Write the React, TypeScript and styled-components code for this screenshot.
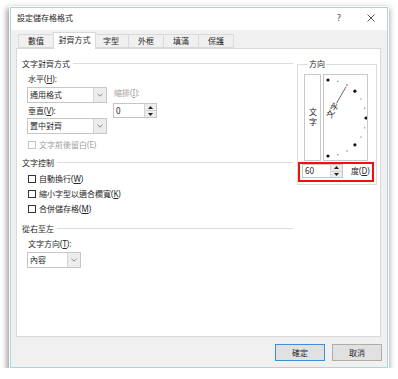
import styled, { createGlobalStyle } from "styled-components";

const GlobalStyle = createGlobalStyle`
  html, body { margin: 0; padding: 0; background: #fff; }
  body {
    font-family: "Noto Sans", "Noto Sans CJK TC", sans-serif;
    font-size: 8px;
    line-height: 10px;
    color: #262626;
    text-autospace: no-autospace;
  }
  u { text-underline-offset: 1px; }
`;

const tabs = [
  { label: "數值", w: 36 },
  { label: "對齊方式", w: 39, active: true },
  { label: "字型", w: 36 },
  { label: "外框", w: 36 },
  { label: "填滿", w: 36 },
  { label: "保護", w: 36 },
];

const textControls = [
  { label: "自動換行", key: "W" },
  { label: "縮小字型以適合欄寬", key: "K" },
  { label: "合併儲存格", key: "M" },
];

const Chevron = () => (
  <svg width="6" height="4" viewBox="0 0 6 4">
    <path d="M0.5 0.8 L3 3.2 L5.5 0.8" fill="none" stroke="#7a7a7a" strokeWidth="0.9" />
  </svg>
);

const Select = ({ value, width, top }: { value: string; width: number; top: number }) => (
  <S.Select $w={width} $top={top}>
    <span>{value}</span>
    <S.DropButton>
      <Chevron />
    </S.DropButton>
  </S.Select>
);

const Spinner = () => (
  <S.Spinner>
    <S.SpinHalf>
      <svg width="5" height="3" viewBox="0 0 5 3"><path d="M2.5 0 L5 3 L0 3 Z" fill="#222" /></svg>
    </S.SpinHalf>
    <S.SpinHalf>
      <svg width="5" height="3" viewBox="0 0 5 3"><path d="M0 0 L5 0 L2.5 3 Z" fill="#222" /></svg>
    </S.SpinHalf>
  </S.Spinner>
);

// half dial, centre on the left edge, 15 degree ticks
const Dial = () => {
  const cx = 4;
  const cy = 43;
  const r = 38;
  const dots = [];
  for (let a = -90; a <= 90; a += 15) {
    const rad = (a * Math.PI) / 180;
    const big = a % 45 === 0;
    const picked = a === 60;
    dots.push(
      <circle
        key={a}
        cx={cx + r * Math.cos(rad)}
        cy={cy - r * Math.sin(rad)}
        r={big ? 1.6 : picked ? 0.8 : 0.6}
        fill={big ? "#111" : picked ? "#e8333a" : "#555"}
      />
    );
  }
  const dx = Math.cos(Math.PI / 3);
  const dy = -Math.sin(Math.PI / 3);
  return (
    <svg width="43" height="85" viewBox="0 0 43 85">
      {dots}
      <line x1={cx + dx * 17} y1={cy + dy * 17} x2={cx + dx * 36} y2={cy + dy * 36} stroke="#444" strokeWidth="0.8" />
      <text
        x={cx + 1}
        y={cy + 3}
        fontSize="8"
        fill="#262626"
        fontFamily='"Noto Sans CJK TC", sans-serif'
        transform={`rotate(-60 ${cx} ${cy})`}
      >
        文字
      </text>
    </svg>
  );
};

const App = () => (
  <>
    <GlobalStyle />
    <S.Window>
      <S.TitleBar>
        <S.Title>設定儲存格格式</S.Title>
        <S.TitleButton>?</S.TitleButton>
        <S.TitleButton>
          <svg width="8" height="8" viewBox="0 0 8 8">
            <path d="M0.5 0.5 L7.5 7.5 M7.5 0.5 L0.5 7.5" stroke="#444" strokeWidth="0.9" />
          </svg>
        </S.TitleButton>
      </S.TitleBar>

      <S.TabStrip>
        {tabs.map((t) => (
          <S.Tab key={t.label} $w={t.w} $active={t.active}>
            {t.label}
          </S.Tab>
        ))}
      </S.TabStrip>

      <S.Panel>
        <S.LeftCol>
          <S.GroupHeader $top={0}>文字對齊方式</S.GroupHeader>
          <S.Indent>
            <S.FieldLabel $top={5}>
              水平(<u>H</u>):
            </S.FieldLabel>
            <S.AlignRow>
              <S.SubCol>
                <Select value="通用格式" width={80} top={0} />
                <S.FieldLabel $top={3}>
                  垂直(<u>V</u>):
                </S.FieldLabel>
                <Select value="置中對齊" width={80} top={2} />
              </S.SubCol>
              <S.IndentCol>
                <S.FieldLabel $top={0} $disabled>
                  縮排(<u>I</u>):
                </S.FieldLabel>
                <S.SpinBox $w={44} $h={15} $top={5}>
                  <S.SpinValue>0</S.SpinValue>
                  <Spinner />
                </S.SpinBox>
              </S.IndentCol>
            </S.AlignRow>
            <S.CheckRow $top={6} $disabled>
              <S.CheckBox $disabled />
              文字前後留白(E)
            </S.CheckRow>
          </S.Indent>

          <S.GroupHeader $top={8}>文字控制</S.GroupHeader>
          <S.CheckList>
            {textControls.map((c) => (
              <S.CheckRow key={c.key} $top={0}>
                <S.CheckBox />
                <span>
                  {c.label}(<u>{c.key}</u>)
                </span>
              </S.CheckRow>
            ))}
          </S.CheckList>

          <S.GroupHeader $top={10}>從右至左</S.GroupHeader>
          <S.Indent>
            <S.FieldLabel $top={5}>
              文字方向(<u>T</u>):
            </S.FieldLabel>
            <Select value="內容" width={54} top={3} />
          </S.Indent>
        </S.LeftCol>

        <S.Orientation>
          <S.Legend>方向</S.Legend>
          <S.DialRow>
            <S.VerticalText>文字</S.VerticalText>
            <S.DialBox>
              <Dial />
            </S.DialBox>
          </S.DialRow>
          <S.DegreeRow>
            <S.SpinBox $w={41} $h={14} $top={0}>
              <S.SpinValue>60</S.SpinValue>
              <Spinner />
            </S.SpinBox>
            <span>
              度(<u>D</u>)
            </span>
          </S.DegreeRow>
        </S.Orientation>
      </S.Panel>

      <S.Footer>
        <S.Button $primary>確定</S.Button>
        <S.Button>取消</S.Button>
      </S.Footer>
    </S.Window>
  </>
);

namespace S {
  export const Window = styled.div`
    box-sizing: border-box;
    width: 378px;
    height: 361px;
    margin: 7px 0 0 10px;
    border: 1px solid #a9d4de;
    background: #f0f0f0;
    box-shadow: 0 0 0 1px #fff, -1px 3px 6px 2px rgba(0, 0, 0, 0.42);
    display: flex;
    flex-direction: column;
  `;

  export const TitleBar = styled.div`
    height: 22px;
    background: #fff;
    display: flex;
    align-items: center;
    padding: 0 0 2px 6px;
    box-sizing: border-box;
  `;

  export const Title = styled.div`
    flex: 1;
  `;

  export const TitleButton = styled.div`
    width: 32px;
    display: flex;
    justify-content: center;
    align-items: center;
    font-size: 9px;
    color: #444;
  `;

  export const TabStrip = styled.div`
    height: 18px;
    display: flex;
    align-items: flex-end;
    padding-left: 7px;
  `;

  export const Tab = styled.div<{ $w: number; $active?: boolean }>`
    box-sizing: border-box;
    width: ${(p) => p.$w + (p.$active ? 4 : 0)}px;
    height: ${(p) => (p.$active ? 17 : 14)}px;
    margin: 0 ${(p) => (p.$active ? -2 : 0)}px ${(p) => (p.$active ? -1 : 0)}px;
    border: 1px solid #d9d9d9;
    border-bottom: ${(p) => (p.$active ? "none" : "1px solid #d9d9d9")};
    background: ${(p) => (p.$active ? "#fff" : "#f0f0f0")};
    position: relative;
    z-index: ${(p) => (p.$active ? 2 : 0)};
    display: flex;
    justify-content: center;
    align-items: center;
    padding-bottom: ${(p) => (p.$active ? 2 : 0)}px;
    & + & {
      margin-left: -1px;
    }
  `;

  export const Panel = styled.div`
    box-sizing: border-box;
    height: 289px;
    margin: 0 6px 0 5px;
    border: 1px solid #d9d9d9;
    background: #fff;
    padding: 10px 0 0 5px;
    display: flex;
    align-items: flex-start;
  `;

  export const LeftCol = styled.div`
    width: 271px;
    display: flex;
    flex-direction: column;
  `;

  export const GroupHeader = styled.div<{ $top: number }>`
    height: 10px;
    margin-top: ${(p) => p.$top}px;
    display: flex;
    align-items: center;
    gap: 3px;
    &::after {
      content: "";
      flex: 1;
      height: 1px;
      background: #dcdcdc;
      margin-top: -1px;
    }
  `;

  export const Indent = styled.div`
    padding-left: 5px;
    display: flex;
    flex-direction: column;
  `;

  export const CheckList = styled(Indent)`
    padding-top: 6px;
    gap: 5px;
  `;

  export const FieldLabel = styled.div<{ $top: number; $disabled?: boolean }>`
    height: 10px;
    margin-top: ${(p) => p.$top}px;
    padding-left: 1px;
    color: ${(p) => (p.$disabled ? "#a0a0a0" : "inherit")};
  `;

  export const AlignRow = styled.div`
    display: flex;
    gap: 6px;
    margin-top: 3px;
  `;

  export const SubCol = styled.div`
    display: flex;
    flex-direction: column;
  `;

  export const IndentCol = styled.div`
    display: flex;
    flex-direction: column;
    padding-top: 1px;
  `;

  export const Select = styled.div<{ $w: number; $top: number }>`
    box-sizing: border-box;
    width: ${(p) => p.$w}px;
    height: 16px;
    margin-top: ${(p) => p.$top}px;
    border: 1px solid #c6c6c6;
    background: #fff;
    display: flex;
    align-items: center;
    justify-content: space-between;
    padding-left: 2px;
  `;

  export const DropButton = styled.div`
    width: 12px;
    height: 100%;
    background: #ececec;
    border-left: 1px solid #d4d4d4;
    display: flex;
    align-items: center;
    justify-content: center;
  `;

  export const SpinBox = styled.div<{ $w: number; $h: number; $top: number }>`
    box-sizing: border-box;
    width: ${(p) => p.$w}px;
    height: ${(p) => p.$h}px;
    margin-top: ${(p) => p.$top}px;
    border: 1px solid #c6c6c6;
    background: #fff;
    display: flex;
  `;

  export const SpinValue = styled.div`
    flex: 1;
    padding-left: 2px;
    display: flex;
    align-items: center;
  `;

  export const Spinner = styled.div`
    width: 11px;
    display: flex;
    flex-direction: column;
    border-left: 1px solid #d4d4d4;
    background: #ececec;
  `;

  export const SpinHalf = styled.div`
    flex: 1;
    display: flex;
    align-items: center;
    justify-content: center;
    & + & {
      border-top: 1px solid #d4d4d4;
    }
  `;

  export const CheckRow = styled.div<{ $top: number; $disabled?: boolean }>`
    height: 10px;
    margin: ${(p) => p.$top}px 0 0 1px;
    display: flex;
    align-items: center;
    gap: 3px;
    color: ${(p) => (p.$disabled ? "#a0a0a0" : "inherit")};
  `;

  export const CheckBox = styled.div<{ $disabled?: boolean }>`
    box-sizing: border-box;
    width: 8px;
    height: 8px;
    border: 1px solid ${(p) => (p.$disabled ? "#c4c4c4" : "#333")};
    background: #fff;
  `;

  export const Orientation = styled.fieldset`
    box-sizing: border-box;
    width: 80px;
    margin: 0 0 0 4px;
    padding: 5px 0 6px 6px;
    border: 1px solid #dcdcdc;
    min-width: 0;
  `;

  export const Legend = styled.legend`
    padding: 0 1px;
    margin-left: 4px;
    line-height: 10px;
  `;

  export const DialRow = styled.div`
    display: flex;
    gap: 2px;
  `;

  export const VerticalText = styled.div`
    box-sizing: border-box;
    width: 17px;
    height: 87px;
    border: 1px solid #c8c8c8;
    display: flex;
    align-items: center;
    justify-content: center;
    writing-mode: vertical-rl;
    letter-spacing: 2px;
  `;

  export const DialBox = styled.div`
    box-sizing: border-box;
    width: 45px;
    height: 87px;
    border: 1px solid #c8c8c8;
    display: flex;
  `;

  export const DegreeRow = styled.div`
    position: relative;
    width: 68px;
    margin: 3px 0 0 -2px;
    display: flex;
    align-items: center;
    gap: 8px;
    &::after {
      content: "";
      position: absolute;
      inset: -2px -4px -4px -4px;
      border: 2px solid #ee1111;
    }
  `;

  export const Footer = styled.div`
    flex: 1;
    display: flex;
    justify-content: flex-end;
    gap: 7px;
    padding: 7px 5px 0 0;
  `;

  export const Button = styled.div<{ $primary?: boolean }>`
    box-sizing: border-box;
    width: 50px;
    height: 17px;
    border: 1px solid ${(p) => (p.$primary ? "#3c8fd8" : "#adadad")};
    background: #e1e1e1;
    display: flex;
    align-items: center;
    justify-content: center;
  `;
}

export default App;
